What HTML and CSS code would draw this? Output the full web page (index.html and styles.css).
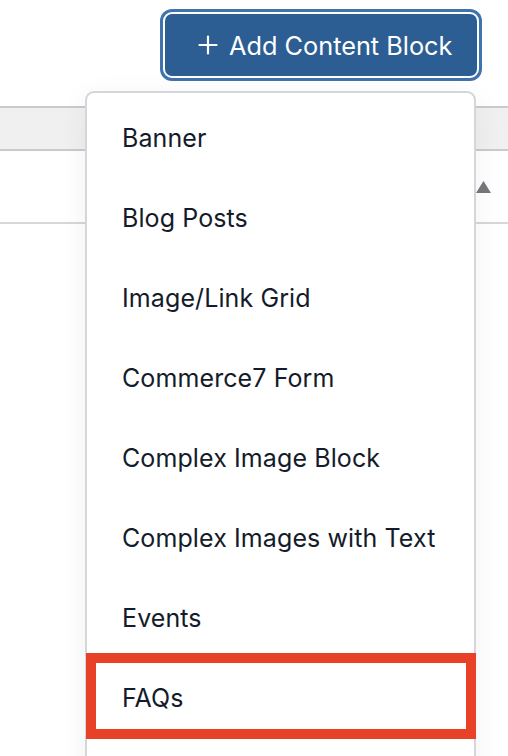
FILE: index.html
```html
<!DOCTYPE html>
<html>
<head>
<meta charset="utf-8">
<link rel="stylesheet" href="styles.css">
</head>
<body>
<div class="page">
  <div class="toolbar">
    <button class="add-btn">
      <svg class="plus" width="20" height="20" viewBox="0 0 20 20"><path d="M10 1.5V18.5M1.5 10H18.5" stroke="#ffffff" stroke-width="2.2" stroke-linecap="round" fill="none"/></svg>
      <span>Add Content Block</span>
    </button>
  </div>
  <div class="table">
    <div class="thead"></div>
    <div class="trow">
      <svg class="sort" width="15" height="12" viewBox="0 0 15 12"><path d="M7.5 0L15 12H0Z" fill="#76787c"/></svg>
    </div>
  </div>
  <div class="dropdown">
    <div class="item">Banner</div>
    <div class="item">Blog Posts</div>
    <div class="item">Image/Link Grid</div>
    <div class="item">Commerce7 Form</div>
    <div class="item">Complex Image Block</div>
    <div class="item">Complex Images with Text</div>
    <div class="item">Events</div>
    <div class="item">FAQs</div>
    <div class="highlight"></div>
  </div>
</div>
</body>
</html>
```
FILE: styles.css
```css
html, body {
  margin: 0;
  padding: 0;
  background: #ffffff;
  font-family: Inter, "Noto Sans", sans-serif;
  overflow: hidden;
}
.page {
  position: relative;
  width: 508px;
  height: 756px;
  overflow: hidden;
}
.toolbar {
  display: flex;
  justify-content: flex-end;
  padding: 12px 29px 0 0;
  height: 98px;
  box-sizing: border-box;
}
.add-btn {
  display: flex;
  align-items: center;
  gap: 11px;
  width: 316px;
  height: 66px;
  box-sizing: border-box;
  background: #2c5e94;
  color: #ffffff;
  border: 2px solid #ffffff;
  border-radius: 9px;
  box-shadow: 0 0 0 3px #3e73ad;
  margin: 0;
  padding: 0 0 0 33px;
  font-family: Inter, "Noto Sans", sans-serif;
  font-size: 25.3px;
  font-weight: 400;
}
.plus {
  flex: none;
}
.table {
  margin-top: 8px;
}
.thead {
  height: 41px;
  background: #f0f0f1;
  border-top: 2px solid #c9cacc;
  border-bottom: 2px solid #c9cacc;
}
.trow {
  height: 71px;
  border-bottom: 2px solid #d6d7d9;
  display: flex;
  justify-content: flex-end;
  align-items: center;
  padding-right: 17px;
}
.sort {
  display: block;
}
.dropdown {
  position: absolute;
  left: 85px;
  top: 91px;
  width: 391px;
  height: 760px;
  box-sizing: border-box;
  background: #ffffff;
  border: 2px solid #d3d6db;
  border-radius: 9px;
  padding-top: 5px;
  box-shadow: 0 6px 30px rgba(0, 0, 0, 0.06);
}
.item {
  height: 80px;
  display: flex;
  align-items: center;
  padding-left: 35px;
  color: #141b2a;
  font-size: 25px;
  letter-spacing: 0.1px;
}
.highlight {
  position: absolute;
  left: -1px;
  top: 560px;
  width: 390px;
  height: 86px;
  box-sizing: border-box;
  border: 10px solid #e84127;
}
```
